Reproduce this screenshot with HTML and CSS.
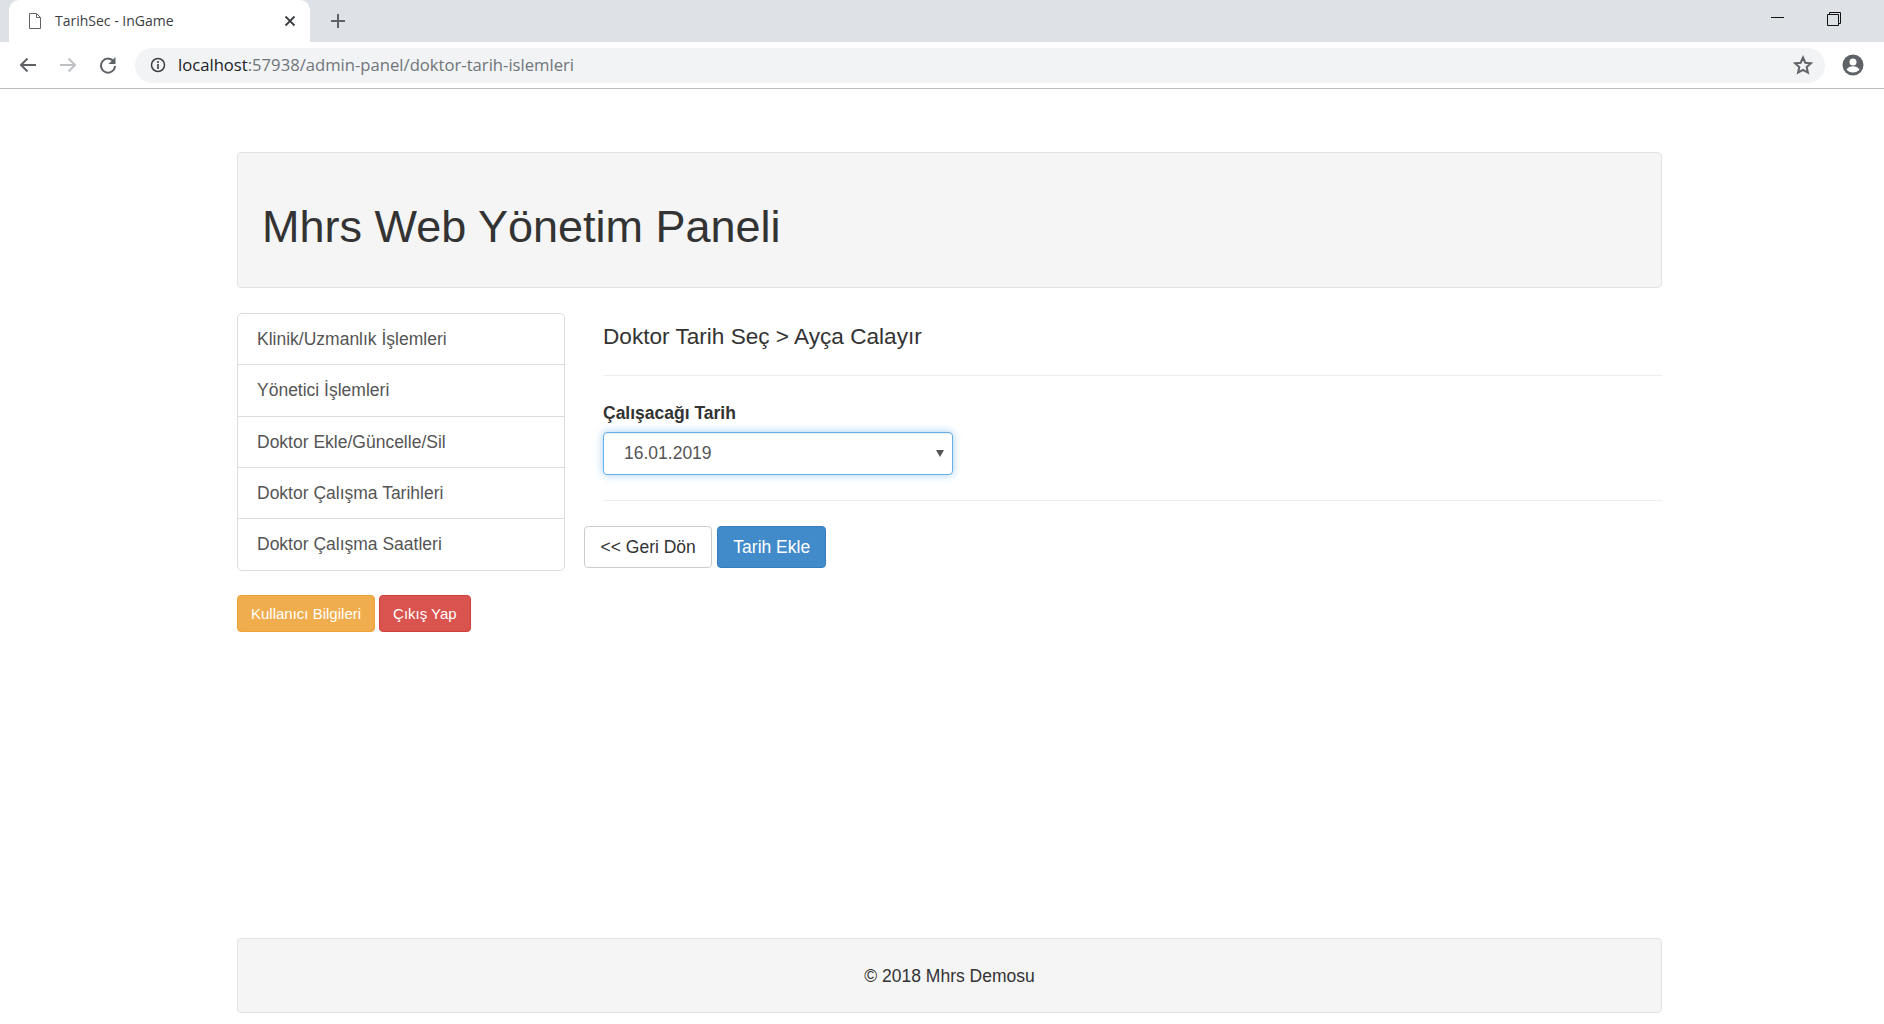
FILE: index.html
```html
<!DOCTYPE html>
<html lang="tr">
<head>
    <meta charset="UTF-8">
    <title>TarihSec - InGame</title>
    <link rel="stylesheet" href="styles.css">
</head>
<body>
    <div class="tabstrip">
        <div class="tab">
            <svg class="tab-icon" width="14" height="16" viewBox="0 0 14 16"><path d="M1.5 .5h7l4 4v11h-11z M8.5 .5v4h4" fill="none" stroke="#5f6368"/></svg>
            <span class="tab-title">TarihSec - InGame</span>
            <svg class="tab-close" width="12" height="12" viewBox="0 0 12 12"><path d="M1.5 1.5l9 9M10.500 1.500l-9 9" stroke="#3c4043" stroke-width="1.800"/></svg>
        </div>
        <svg class="new-tab" width="16" height="16" viewBox="0 0 16 16"><path d="M8 1v14M1 8h14" stroke="#5f6368" stroke-width="2"/></svg>
        <div class="window-controls">
            <svg width="14" height="14" viewBox="0 0 14 14"><path d="M0 5.500h13" stroke="#111" stroke-width="1"/></svg>
            <svg width="14" height="14" viewBox="0 0 14 14"><path d="M.5 2.500h11v11h-11z M2.500 2.500v-2h11v11h-2" fill="none" stroke="#111"/></svg>
        </div>
    </div>
    <div class="toolbar">
        <svg class="nav-icon" width="18" height="16" viewBox="0 0 18 16"><path d="M17 8H2M8.500 1.500L2 8l6.500 6.500" fill="none" stroke="#5f6368" stroke-width="2"/></svg>
        <svg class="nav-icon" width="18" height="16" viewBox="0 0 18 16"><path d="M1 8h15M9.500 1.500L16 8l-6.500 6.500" fill="none" stroke="#bdc1c6" stroke-width="2"/></svg>
        <svg class="nav-icon" width="18" height="18" viewBox="0 0 18 18"><path d="M15 6a7 7 0 1 0 1 4" fill="none" stroke="#5f6368" stroke-width="2"/><path d="M16.500 1v7h-7z" fill="#5f6368"/></svg>
        <div class="omnibox">
            <svg width="16" height="16" viewBox="0 0 16 16"><circle cx="8" cy="8" r="6.500" fill="none" stroke="#3c4043" stroke-width="1.500"/><path d="M8 7v5M8 4v2" stroke="#3c4043" stroke-width="1.600"/></svg>
            <span class="url"><b>localhost</b>:57938/admin-panel/doktor-tarih-islemleri</span>
            <svg class="star" width="20" height="20" viewBox="0 0 20 20"><path d="M10 2.500l2.300 5.200 5.600.6-4.200 3.800 1.200 5.500-4.900-2.800-4.900 2.800 1.200-5.500-4.200-3.800 5.600-.6z" fill="none" stroke="#5f6368" stroke-width="2"/></svg>
        </div>
        <svg class="avatar" width="22" height="22" viewBox="0 0 22 22"><circle cx="11" cy="11" r="10.500" fill="#5f6368"/><circle cx="11" cy="8" r="3.500" fill="#fff"/><path d="M4.500 15.500c1.500-2.600 4-3.300 6.500-3.300s5 .7 6.500 3.300c-1.500 2-3.800 3-6.500 3s-5-1-6.500-3z" fill="#fff"/></svg>
    </div>

    <div class="container">
        <div class="jumbotron">
            <h1>Mhrs Web Yönetim Paneli</h1>
        </div>

        <div class="row">
            <div class="sidebar">
                <ul class="list-group">
                    <li>Klinik/Uzmanlık İşlemleri</li>
                    <li>Yönetici İşlemleri</li>
                    <li>Doktor Ekle/Güncelle/Sil</li>
                    <li>Doktor Çalışma Tarihleri</li>
                    <li>Doktor Çalışma Saatleri</li>
                </ul>
                <div class="side-buttons">
                    <button class="btn btn-sm btn-warning">Kullanıcı Bilgileri</button>
                    <button class="btn btn-sm btn-danger">Çıkış Yap</button>
                </div>
            </div>

            <div class="content">
                <div class="form-area">
                    <h3>Doktor Tarih Seç &gt; Ayça Calayır</h3>
                    <hr class="rule-top">
                    <label for="tarih">Çalışacağı Tarih</label>
                    <div class="select-box" id="tarih">
                        <span>16.01.2019</span>
                        <span class="caret"></span>
                    </div>
                    <hr class="rule-bottom">
                </div>
                <div class="form-buttons">
                    <button class="btn btn-default">&lt;&lt; Geri Dön</button>
                    <button class="btn btn-primary">Tarih Ekle</button>
                </div>
            </div>
        </div>

        <div class="footer">© 2018 Mhrs Demosu</div>
    </div>
</body>
</html>
```

FILE: styles.css
```css
* {
    box-sizing: border-box;
}

body {
    margin: 0;
    height: 1024px;
    overflow: hidden;
    background-color: #fff;
    color: #333;
    font-family: "Liberation Sans", Arial, sans-serif;
    font-size: 17.500px;
}

/* browser bar */
.tabstrip {
    display: flex;
    align-items: center;
    height: 42px;
    background-color: #dee1e6;
    padding-left: 9px;
}

.tab {
    display: flex;
    align-items: center;
    align-self: flex-end;
    width: 301px;
    height: 42px;
    padding: 0 14px 0 19px;
    background-color: #fff;
    border-radius: 10px 10px 0 0;
}

.tab-title {
    flex: 1;
    margin-left: 13px;
    padding-bottom: 2px;
    font-family: "Open Sans", sans-serif;
    font-size: 14px;
    color: #3c4043;
}

.new-tab {
    margin-left: 20px;
}

.window-controls {
    display: flex;
    gap: 42px;
    margin-left: auto;
    padding-right: 43px;
    padding-bottom: 4px;
}

.toolbar {
    display: flex;
    align-items: center;
    height: 47px;
    padding: 0 20px 0 19px;
    border-bottom: 1px solid #bcbcbc;
}

.nav-icon {
    margin-right: 22px;
}

.omnibox {
    display: flex;
    align-items: center;
    flex: 1;
    height: 35px;
    margin-left: -4px;
    padding: 0 12px 0 15px;
    border-radius: 18px;
    background-color: #f1f3f4;
}

.url {
    flex: 1;
    margin-left: 12px;
    padding-bottom: 2px;
    font-family: "Open Sans", sans-serif;
    font-size: 16.650px;
    color: #70757a;
}

.url b {
    font-weight: normal;
    color: #202124;
}

.avatar {
    margin-left: 17px;
}

/* page */
.container {
    display: flex;
    flex-direction: column;
    width: 1425px;
    margin-left: 237px;
}

.jumbotron {
    height: 136px;
    margin-top: 63px;
    padding: 49px 24px 0;
    background-color: #f5f5f5;
    border: 1px solid #e3e3e3;
    border-radius: 4px;
}

h1 {
    margin: 0;
    font-size: 45px;
    font-weight: 500;
    line-height: 50px;
}

.row {
    display: flex;
    margin-top: 25px;
    height: 625px;
}

.sidebar {
    width: 328px;
}

.list-group {
    margin: 0;
    padding: 0;
    list-style: none;
    border: 1px solid #ddd;
    border-radius: 5px;
    color: #555;
}

.list-group li {
    height: 51.250px;
    padding: 13px 19px 0;
    line-height: 24px;
    border-bottom: 1px solid #ddd;
}

.list-group li:last-child {
    border-bottom: none;
}

.side-buttons {
    display: flex;
    gap: 4px;
    margin-top: 24px;
}

.btn {
    font-family: inherit;
    font-size: 17.500px;
    border: 1px solid transparent;
    border-radius: 4px;
    height: 42px;
    padding: 0 15px;
    color: #fff;
}

.btn-sm {
    height: 37px;
    padding: 0 13px;
    font-size: 15px;
}

.btn-warning {
    background-color: #f0ad4e;
    border-color: #eea236;
}

.btn-danger {
    background-color: #d9534f;
    border-color: #d43f3a;
}

.btn-default {
    padding: 0 15.500px;
    background-color: #fff;
    border-color: #ccc;
    color: #333;
}

.btn-primary {
    background-color: #428bca;
    border-color: #357ebd;
}

.content {
    flex: 1;
    padding-left: 19px;
}

.form-area {
    padding-left: 19px;
}

h3 {
    margin: 10px 0 0;
    font-size: 22.600px;
    font-weight: 500;
    line-height: 27px;
}

hr {
    margin: 0;
    border: none;
    border-top: 1px solid #eee;
}

.rule-top {
    margin-top: 25px;
}

.rule-bottom {
    margin-top: 25px;
}

label {
    display: block;
    margin: 25px 0 7px;
    font-weight: bold;
    line-height: 24px;
}

.select-box {
    display: flex;
    align-items: center;
    justify-content: space-between;
    width: 350px;
    height: 43px;
    padding: 0 8px 0 20px;
    background-color: #fff;
    border: 1px solid #66afe9;
    border-radius: 4px;
    box-shadow: inset 0 1px 1px rgba(0, 0, 0, .075), 0 0 8px rgba(102, 175, 233, .6);
    color: #555;
}

.caret {
    border-top: 7px solid #555;
    border-left: 4px solid transparent;
    border-right: 4px solid transparent;
}

.form-buttons {
    display: flex;
    gap: 5px;
    margin-top: 25px;
}

.footer {
    height: 75px;
    padding-top: 25px;
    line-height: 24px;
    text-align: center;
    background-color: #f5f5f5;
    border: 1px solid #e3e3e3;
    border-radius: 4px;
}
```
